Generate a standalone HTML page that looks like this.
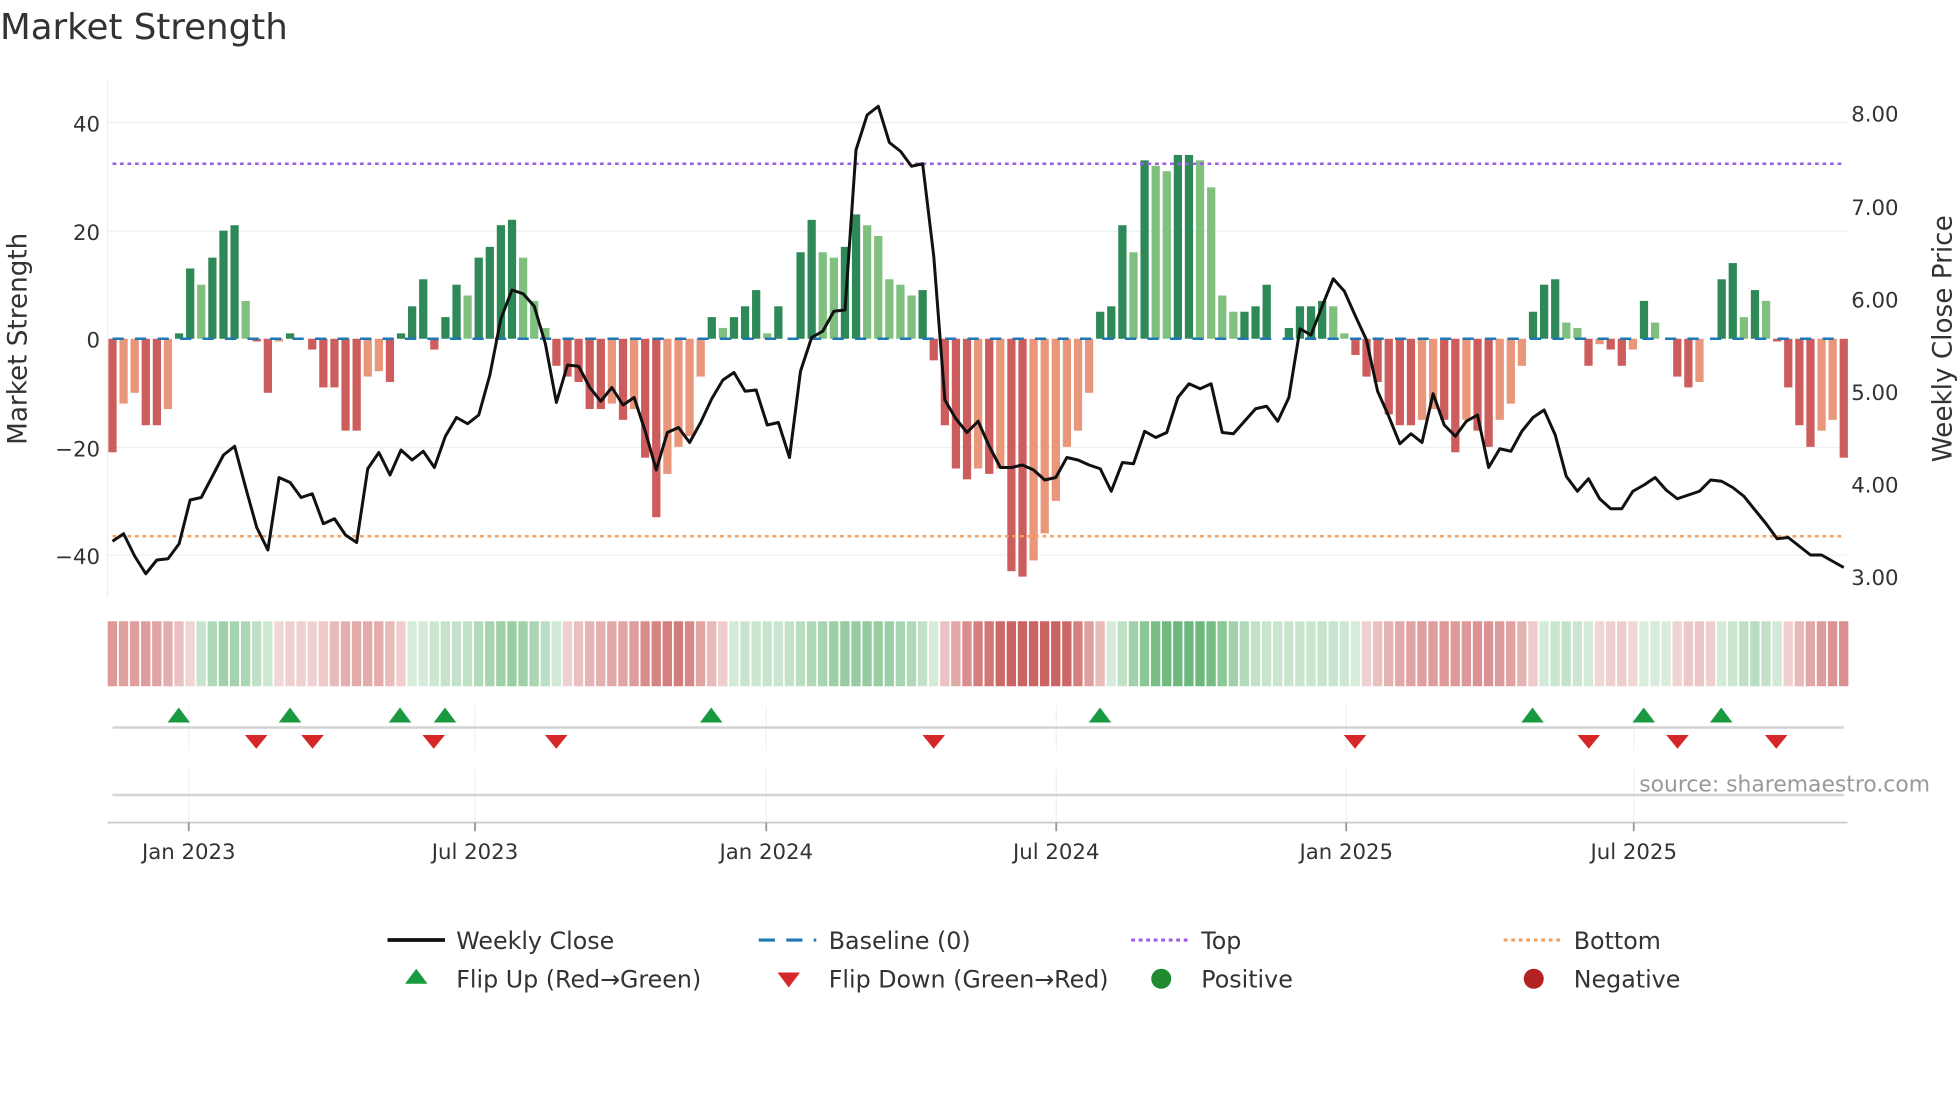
<!DOCTYPE html>
<html><head><meta charset="utf-8"><style>
html,body{margin:0;padding:0;background:#fff;}
svg{display:block;font-family:"DejaVu Sans","Liberation Sans",sans-serif;}
</style></head><body>
<svg id="s" width="1960" height="1102" viewBox="0 0 1568 881.6" xmlns="http://www.w3.org/2000/svg">
<rect width="1568" height="882" fill="#fff"/>
<text x="0" y="31" font-size="28.5" fill="#333">Market Strength</text>
<g id="grid" stroke="#edf0f3" stroke-width="1">
<line x1="86" y1="98" x2="1478" y2="98"/><line x1="86" y1="185" x2="1478" y2="185"/>
<line x1="86" y1="358" x2="1478" y2="358"/><line x1="86" y1="444" x2="1478" y2="444"/>
<line x1="86" y1="65" x2="86" y2="478"/>
</g>
<g font-size="17" fill="#333" text-anchor="end">
<text x="80" y="105">40</text><text x="80" y="192">20</text><text x="80" y="278">0</text>
<text x="80" y="365">−20</text><text x="80" y="451">−40</text>
</g>
<g font-size="17" fill="#333">
<text x="1481" y="97">8.00</text><text x="1481" y="172">7.00</text><text x="1481" y="246">6.00</text>
<text x="1481" y="320">5.00</text><text x="1481" y="394">4.00</text><text x="1481" y="468">3.00</text>
</g>
<text transform="translate(21,271) rotate(-90)" font-size="21" fill="#333" text-anchor="middle">Market Strength</text>
<text transform="translate(1561,271) rotate(-90)" font-size="21" fill="#333" text-anchor="middle">Weekly Close Price</text>
<g id="bars"></g>
<g id="heat"></g>
<line x1="90" y1="131" x2="1475" y2="131" stroke="#9b5de5" stroke-width="2" stroke-dasharray="3,3"/>
<line x1="90" y1="429" x2="1475" y2="429" stroke="#f4a261" stroke-width="2" stroke-dasharray="3,3"/>
<line x1="90" y1="271" x2="1475" y2="271" stroke="#1f77b4" stroke-width="2" stroke-dasharray="9,9"/>
<polyline id="price" fill="none" stroke="#111" stroke-width="2.4" stroke-linejoin="round"/>
<g stroke="#eef0f4" stroke-width="1">
<line x1="151" y1="565" x2="151" y2="600"/><line x1="380" y1="565" x2="380" y2="600"/><line x1="613" y1="565" x2="613" y2="600"/><line x1="845" y1="565" x2="845" y2="600"/><line x1="1077" y1="565" x2="1077" y2="600"/><line x1="1307" y1="565" x2="1307" y2="600"/>
<line x1="151" y1="615" x2="151" y2="658"/><line x1="380" y1="615" x2="380" y2="658"/><line x1="613" y1="615" x2="613" y2="658"/><line x1="845" y1="615" x2="845" y2="658"/><line x1="1077" y1="615" x2="1077" y2="658"/><line x1="1307" y1="615" x2="1307" y2="658"/>
</g>
<line x1="90" y1="582" x2="1475" y2="582" stroke="#d4d4d4" stroke-width="2"/>
<line x1="90" y1="636" x2="1475" y2="636" stroke="#d4d4d4" stroke-width="2"/>
<line x1="86" y1="658" x2="1478" y2="658" stroke="#ccc" stroke-width="1.5"/>
<g stroke="#999" stroke-width="1.5">
<line x1="151" y1="658" x2="151" y2="665"/><line x1="380" y1="658" x2="380" y2="665"/><line x1="613" y1="658" x2="613" y2="665"/><line x1="845" y1="658" x2="845" y2="665"/><line x1="1077" y1="658" x2="1077" y2="665"/><line x1="1307" y1="658" x2="1307" y2="665"/>
</g>
<g id="tri"></g>
<text x="1544" y="633" font-size="17.5" fill="#999" text-anchor="end">source: sharemaestro.com</text>
<g font-size="17" fill="#333" text-anchor="middle">
<text x="151" y="687">Jan 2023</text><text x="380" y="687">Jul 2023</text><text x="613" y="687">Jan 2024</text><text x="845" y="687">Jul 2024</text><text x="1077" y="687">Jan 2025</text><text x="1307" y="687">Jul 2025</text>
</g>
<g font-size="19" fill="#333">
<line x1="310" y1="752" x2="356" y2="752" stroke="#111" stroke-width="3"/>
<text x="365" y="759">Weekly Close</text>
<line x1="607" y1="752" x2="653" y2="752" stroke="#1f77b4" stroke-width="2.5" stroke-dasharray="13,9"/>
<text x="663" y="759">Baseline (0)</text>
<line x1="905" y1="752" x2="951" y2="752" stroke="#9b5de5" stroke-width="2.5" stroke-dasharray="3,3"/>
<text x="961" y="759">Top</text>
<line x1="1203" y1="752" x2="1249" y2="752" stroke="#f4a261" stroke-width="2.5" stroke-dasharray="3,3"/>
<text x="1259" y="759">Bottom</text>
<polygon points="333,775 342,787 324,787" fill="#1a9a40"/>
<text x="365" y="790">Flip Up (Red→Green)</text>
<polygon points="622,778 640,778 631,790" fill="#d62728"/>
<text x="663" y="790">Flip Down (Green→Red)</text>
<circle cx="929" cy="783" r="8" fill="#1f8a2e"/>
<text x="961" y="790">Positive</text>
<circle cx="1227" cy="783" r="8" fill="#b22222"/>
<text x="1259" y="790">Negative</text>
</g>
</svg>
<script>
var vals=[-21,-12,-10,-16,-16,-13,1,13,10,15,20,21,7,-0.5,-10,-0.5,1,0,-2,-9,-9,-17,-17,-7,-6,-8,1,6,11,-2,4,10,8,15,17,21,22,15,7,2,-5,-7,-8,-13,-13,-12,-15,-13,-22,-33,-25,-20,-18,-7,4,2,4,6,9,1,6,0,16,22,16,15,17,23,21,19,11,10,8,9,-4,-16,-24,-26,-24,-25,-24,-43,-44,-41,-36,-30,-20,-17,-10,5,6,21,16,33,32,31,34,34,33,28,8,5,5,6,10,0,2,6,6,7,6,1,-3,-7,-8,-14,-16,-16,-15,-13,-15,-21,-15,-17,-20,-15,-12,-5,5,10,11,3,2,-5,-1,-2,-5,-2,7,3,0,-7,-9,-8,0,11,14,4,9,7,-0.5,-9,-16,-20,-17,-15,-22];
var py=[433,427,445,459,448,447,435,400,398,381,364,357,390,422,440,382,386,398,395,419,415,428,434,375,362,380,360,368,361,374,349,334,339,332,300,255,232,235,245,275,322,292,293,310,321,310,324,318,345,376,346,342,354,338,319,304,298,313,312,340,338,366,297,270,265,249,248,120,92,85,114,121,133,131,205,320,335,346,337,357,374,374,372,376,384,382,366,368,372,375,393,370,371,345,350,346,318,307,311,307,346,347,337,327,325,337,318,263,268,245,223,233,253,272,313,333,355,347,354,315,340,349,337,332,374,359,361,345,334,328,348,381,393,383,399,407,407,393,388,382,392,399,396,393,384,385,390,397,408,419,431,430,437,444,444,449,454];
var n=vals.length, x0=90, x1=1475, dx=(x1-x0)/(n-1);
var NS="http://www.w3.org/2000/svg";
function el(g,t,a){var e=document.createElementNS(NS,t);for(var k in a)e.setAttribute(k,a[k]);document.getElementById(g).appendChild(e);return e;}
var prev=0;
for(var i=0;i<n;i++){
 var v=vals[i],x=x0+i*dx, h=Math.abs(v)*4.325, c;
 if(v>=0){c=(v>=prev)?"#2e8857":"#80c07f";}else{c=(v<=prev)?"#cd5c5c":"#e9967a";}
 if(Math.abs(v)>0.2) el("bars","rect",{x:x-3.3,y:v>=0?271-h:271,width:6.6,height:Math.max(h,1),fill:c});
 prev=v;
 var s=0,cnt=0;for(var j=Math.max(0,i-3);j<=Math.min(n-1,i+1);j++){s+=vals[j];cnt++;} var m=s/cnt;
 var a=Math.min(1,0.25+Math.abs(m)/40);
 var hc=m>=0?"rgba(60,160,80,"+(a*0.75)+")":"rgba(190,60,60,"+(a*0.8)+")";
 el("heat","rect",{x:x-4.4+0.6,y:497,width:dx-1.4,height:52,fill:hc});
}
document.getElementById("price").setAttribute("points",py.map(function(y,i){return (x0+i*(x1-x0)/(py.length-1)).toFixed(1)+","+y;}).join(" "));
[143,232,320,356,569,880,1226,1315,1377].forEach(function(x){el("tri","polygon",{points:(x)+",566 "+(x+9)+",578 "+(x-9)+",578",fill:"#1a9a40"});});
[205,250,347,445,747,1084,1271,1342,1421].forEach(function(x){el("tri","polygon",{points:(x-9)+",588 "+(x+9)+",588 "+x+",599",fill:"#d62728"});});
</script>
</body></html>
